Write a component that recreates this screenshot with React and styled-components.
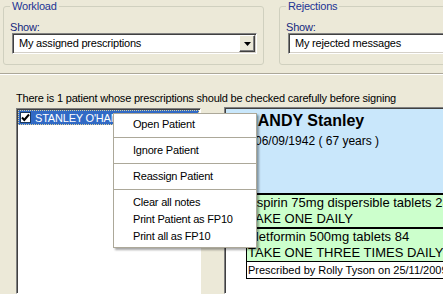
import React from "react";
import styled, { createGlobalStyle } from "styled-components";

const GlobalStyle = createGlobalStyle`
    html, body {
        margin: 0;
        padding: 0;
        background: #ece9d8;
    }
    body {
        font-family: "Liberation Sans", Arial, sans-serif;
        font-size: 11px;
        overflow: hidden;
    }
`;

const Page = styled.div`
    position: relative;
    width: 443px;
    height: 294px;
    overflow: hidden;
    display: flex;
    flex-direction: column;
    letter-spacing: -0.2px;
    color: #000;
`;

const TopBar = styled.div`
    display: flex;
    gap: 15px;
    padding-left: 3px;
`;

const GroupBox = styled.fieldset`
    flex-shrink: 0;
    box-sizing: border-box;
    width: 261px;
    min-width: 0;
    margin: 0;
    padding: 8px 6px 10px 6px;
    border: 1px solid #d0d0bf;
    border-radius: 3px;
`;

const GroupTitle = styled.legend`
    padding: 0 2px;
    font-size: 11px;
    line-height: 13px;
    color: #1c3494;
`;

const Label = styled.div`
    line-height: 12px;
    color: #14287e;
`;

const Combo = styled.div`
    display: flex;
    box-sizing: border-box;
    width: ${(p) => p.$width}px;
    height: 21px;
    margin-left: 2px;
    padding: 1px;
    background: #fff;
    border: 1px solid;
    border-color: #808080 #fff #fff #808080;
    box-shadow: inset 1px 1px 0 #404040, inset -1px -1px 0 #d4d0c8;
`;

const ComboText = styled.div`
    flex: 1;
    padding-left: 5px;
    line-height: 17px;
    white-space: nowrap;
    overflow: hidden;
`;

const DropButton = styled.div`
    box-sizing: border-box;
    width: 16px;
    height: 17px;
    display: flex;
    align-items: center;
    justify-content: center;
    background: #ece9d8;
    border: 1px solid;
    border-color: #fff #404040 #404040 #fff;
    box-shadow: inset -1px -1px 0 #808080;
`;

const Divider = styled.div`
    margin-top: 8px;
    border-top: 1px solid #aca899;
    border-bottom: 1px solid #fff;
`;

const Caption = styled.div`
    margin: 17px 0 0 16px;
    line-height: 13px;
    white-space: nowrap;
`;

const Main = styled.div`
    flex: 1;
    min-height: 0;
    display: flex;
    gap: 23px;
    margin-top: 2px;
    padding-left: 16px;
`;

const ListBox = styled.div`
    flex-shrink: 0;
    box-sizing: border-box;
    width: 185px;
    margin-top: 1px;
    padding: 1px 1px 0 1px;
    background: #fff;
    border: 1px solid;
    border-color: #808080 #fff #fff #808080;
    box-shadow: inset 1px 1px 0 #404040;
`;

const ListRow = styled.div`
    display: flex;
    align-items: center;
    gap: 4px;
    height: 15px;
    padding-left: 2px;
    background: ${(p) => (p.$selected ? "#316ac5" : "transparent")};
    color: ${(p) => (p.$selected ? "#fff" : "#000")};
    outline: ${(p) => (p.$selected ? "1px dotted #d8d0a0" : "none")};
    outline-offset: -1px;
    white-space: nowrap;
    overflow: hidden;
`;

const CheckBox = styled.div`
    flex-shrink: 0;
    box-sizing: border-box;
    width: 11px;
    height: 11px;
    background: #fff;
    border: 1px solid #1c3a5f;
    display: flex;
    align-items: center;
    justify-content: center;
`;

const DetailPane = styled.div`
    flex-shrink: 0;
    box-sizing: border-box;
    width: 320px;
    padding: 1px 0 0 1px;
    background: #fff;
    border: 1px solid;
    border-color: #808080 #fff #fff #808080;
    box-shadow: inset 1px 1px 0 #404040;
    font-family: "Liberation Sans", Arial, sans-serif;
    letter-spacing: 0;
`;

const PatientHeader = styled.div`
    box-sizing: border-box;
    height: 84px;
    padding: 3px 0 0 4px;
    background: #c9e7fb;
`;

const PatientName = styled.div`
    font-size: 16px;
    font-weight: bold;
    line-height: 18px;
    white-space: nowrap;
`;

const PatientBorn = styled.div`
    margin-top: 4px;
    padding-left: 25px;
    font-size: 12px;
    line-height: 14px;
    white-space: nowrap;
`;

const Drugs = styled.div`
    margin-left: 20px;
    border-left: 1px solid #000;
`;

const DrugBlock = styled.div`
    border-top: 2px solid #000;
    background: #ccffcc;
`;

const DrugLine = styled.div`
    padding-left: 1px;
    font-size: 13px;
    line-height: 16px;
    white-space: nowrap;
`;

const Prescriber = styled.div`
    padding-left: 1px;
    border-top: 1px solid #000;
    border-bottom: 1px solid #000;
    background: #fff;
    font-size: 11px;
    line-height: 16px;
    white-space: nowrap;
`;

const ContextMenu = styled.div`
    position: absolute;
    left: 113px;
    top: 113px;
    box-sizing: border-box;
    width: 144px;
    padding: 2px 0;
    background: #fff;
    border: 1px solid #aca899;
    box-shadow: 2px 2px 2px rgba(0, 0, 0, 0.35);
`;

const MenuItem = styled.div`
    height: 17px;
    padding-left: 19px;
    line-height: 17px;
    white-space: nowrap;
`;

const MenuSeparator = styled.div`
    height: 1px;
    margin: 4px 0;
    background: #aca899;
`;

const Arrow = () => (
    <svg width="7" height="4" viewBox="0 0 7 4">
        <polygon points="0,0 7,0 3.5,4" fill="#000" />
    </svg>
);

const Tick = () => (
    <svg width="9" height="9" viewBox="0 0 9 9">
        <polyline points="1,4.5 3.3,7 8,1.5" fill="none" stroke="#000" strokeWidth="2" />
    </svg>
);

const drugs = [
    ["Aspirin 75mg dispersible tablets 28", "TAKE ONE DAILY"],
    ["Metformin 500mg tablets 84", "TAKE ONE THREE TIMES DAILY"],
];

const menu = [
    ["Open Patient"],
    ["Ignore Patient"],
    ["Reassign Patient"],
    ["Clear all notes", "Print Patient as FP10", "Print all as FP10"],
];

export default function App() {
    return (
        <Page>
            <GlobalStyle />
            <TopBar>
                <GroupBox>
                    <GroupTitle>Workload</GroupTitle>
                    <Label>Show:</Label>
                    <Combo $width={245}>
                        <ComboText>My assigned prescriptions</ComboText>
                        <DropButton>
                            <Arrow />
                        </DropButton>
                    </Combo>
                </GroupBox>
                <GroupBox>
                    <GroupTitle>Rejections</GroupTitle>
                    <Label>Show:</Label>
                    <Combo $width={245}>
                        <ComboText>My rejected messages</ComboText>
                        <DropButton>
                            <Arrow />
                        </DropButton>
                    </Combo>
                </GroupBox>
            </TopBar>
            <Divider />
            <Caption>
                There is 1 patient whose prescriptions should be checked carefully before signing
            </Caption>
            <Main>
                <ListBox>
                    <ListRow $selected>
                        <CheckBox>
                            <Tick />
                        </CheckBox>
                        STANLEY O'HANDY
                    </ListRow>
                </ListBox>
                <DetailPane>
                    <PatientHeader>
                        <PatientName>O'HANDY Stanley</PatientName>
                        <PatientBorn>06/09/1942 ( 67 years )</PatientBorn>
                    </PatientHeader>
                    <Drugs>
                        {drugs.map(([name, dose]) => (
                            <DrugBlock key={name}>
                                <DrugLine>{name}</DrugLine>
                                <DrugLine>{dose}</DrugLine>
                            </DrugBlock>
                        ))}
                        <Prescriber>Prescribed by Rolly Tyson on 25/11/2009</Prescriber>
                    </Drugs>
                </DetailPane>
            </Main>
            <ContextMenu>
                {menu.map((group, i) => (
                    <React.Fragment key={i}>
                        {i > 0 && <MenuSeparator />}
                        {group.map((item) => (
                            <MenuItem key={item}>{item}</MenuItem>
                        ))}
                    </React.Fragment>
                ))}
            </ContextMenu>
        </Page>
    );
}
